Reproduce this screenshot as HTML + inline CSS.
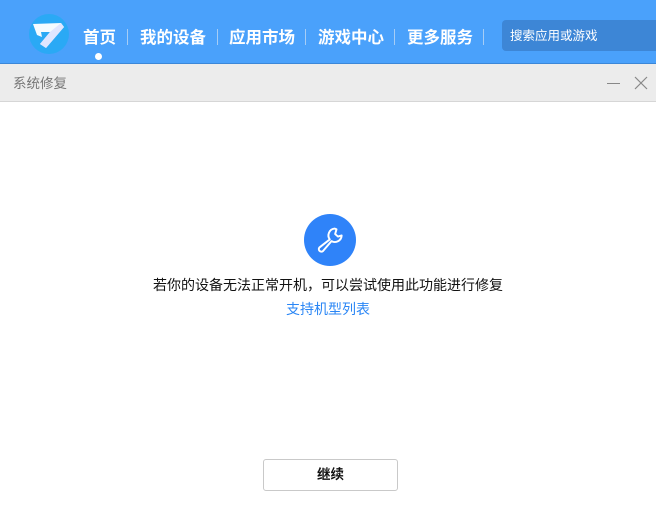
<!DOCTYPE html>
<html><head><meta charset="utf-8"><style>
*{margin:0;padding:0;box-sizing:border-box}
body{width:656px;height:510px;overflow:hidden;background:#fff;font-family:"Liberation Sans","Noto Sans CJK SC",sans-serif;position:relative}
.hdr{position:absolute;left:0;top:0;width:656px;height:64px;background:#4aa1fb;border-bottom:1px solid #3b87d8}
.nav{position:absolute;top:27px;color:#fff;font-size:16.5px;font-weight:bold;line-height:22px;white-space:nowrap}
.sep{position:absolute;top:29px;width:1px;height:16px;background:#a6cdf6}
.dot{position:absolute;left:95px;top:53px;width:7px;height:7px;border-radius:50%;background:#fff}
.search{position:absolute;left:502px;top:20px;width:160px;height:31px;background:#3d86d6;border-radius:4px;color:#fff;font-size:12.5px;line-height:32px;padding-left:8px}
.tbar{position:absolute;left:0;top:64px;width:656px;height:38px;background:#ececec;border-bottom:1px solid #d6d6d6}
.ttl{position:absolute;left:13px;top:75px;font-size:13.5px;color:#777;line-height:18px}
.circ{position:absolute;left:304px;top:214px;width:52px;height:52px;border-radius:50%;background:#2f83f9}
.msg{position:absolute;left:0;width:656px;text-align:center;top:276px;font-size:14px;color:#111;line-height:18px}
.lnk{position:absolute;left:0;width:656px;text-align:center;top:300px;font-size:14px;color:#2a86f5;line-height:18px}
.btn{position:absolute;left:263px;top:459px;width:135px;height:32px;border:1px solid #c9c9c9;border-radius:3px;text-align:center;line-height:30px;font-size:13.5px;font-weight:bold;color:#111}
</style></head><body>
<div class="hdr"></div>
<svg style="position:absolute;left:28px;top:13px" width="42" height="42" viewBox="0 0 42 42">
<circle cx="21" cy="21" r="20" fill="#2aa9f5"/>
<path d="M5 11 L33 10 L36 14 L18 35 L12 31 L22 19 L13 19 L14 24 L9 22 Z" fill="#fff" opacity="0.95"/>
<path d="M22 19 L33 10 L36 14 L18 35 L12 31 Z" fill="#dfe6ff"/>
</svg>
<div class="nav" style="left:83px">首页</div>
<div class="sep" style="left:127px"></div>
<div class="nav" style="left:140px">我的设备</div>
<div class="sep" style="left:217px"></div>
<div class="nav" style="left:229px">应用市场</div>
<div class="sep" style="left:305px"></div>
<div class="nav" style="left:318px">游戏中心</div>
<div class="sep" style="left:394px"></div>
<div class="nav" style="left:407px">更多服务</div>
<div class="sep" style="left:483px"></div>
<div class="dot"></div>
<div class="search">搜索应用或游戏</div>
<div class="tbar"></div>
<div class="ttl">系统修复</div>
<div style="position:absolute;left:607px;top:83px;width:13px;height:1px;background:#888"></div>
<svg style="position:absolute;left:634px;top:76px" width="14" height="14" viewBox="0 0 14 14"><path d="M1 1L13 13M13 1L1 13" stroke="#888" stroke-width="1.2"/></svg>
<div class="circ"></div>
<svg style="position:absolute;left:314px;top:224px" width="32" height="32" viewBox="0 0 28 28">
<path d="M18 4 A6 6 0 0 0 13.8 13.5 L4.8 20.5 A2.2 2.2 0 0 0 7.8 23.7 L15.3 15 A6 6 0 0 0 24.2 10 L21 11 L18.5 8.8 L19.7 4.6 Z" fill="none" stroke="#fff" stroke-width="1.7" stroke-linejoin="round"/>
</svg>
<div class="msg">若你的设备无法正常开机，可以尝试使用此功能进行修复</div>
<div class="lnk">支持机型列表</div>
<div class="btn">继续</div>
</body></html>
